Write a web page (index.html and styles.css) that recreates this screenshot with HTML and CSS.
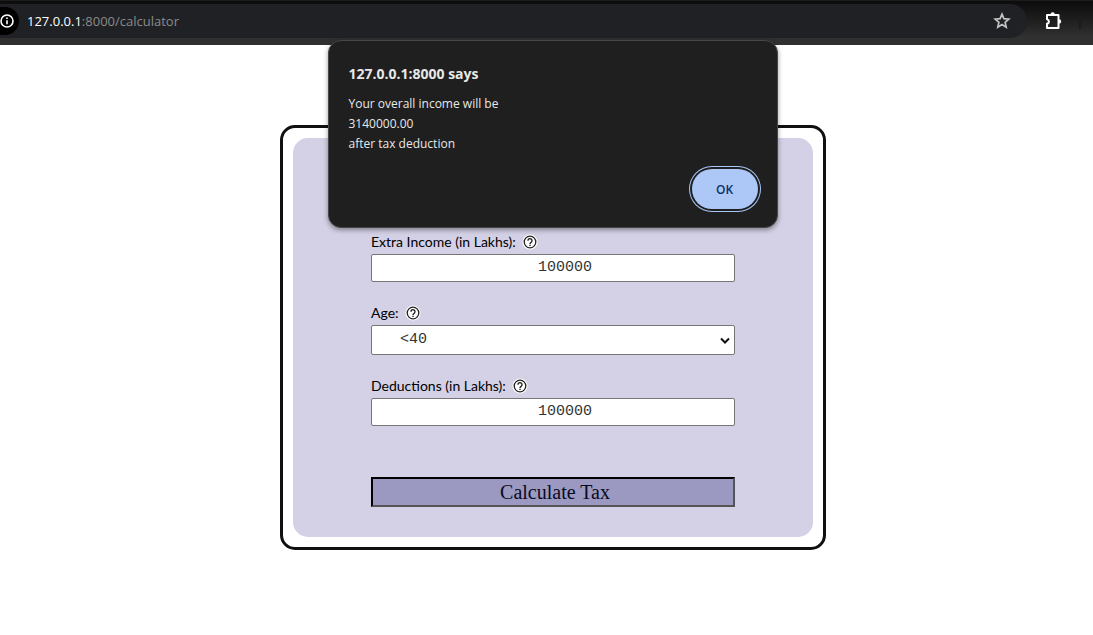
FILE: index.html
```html
<!DOCTYPE html>
<html lang="en">
<head>
<meta charset="utf-8">
<meta name="viewport" content="width=device-width, initial-scale=1">
<title>Tax Calculator</title>
<link rel="stylesheet" href="styles.css">
</head>
<body>
<svg class="defs" width="0" height="0" aria-hidden="true">
  <symbol id="help" viewBox="0 0 16 16">
    <circle cx="8" cy="8" r="7.6" fill="#fff"/>
    <circle cx="8" cy="8" r="5.8" fill="none" stroke="#222" stroke-width="1.3"/>
    <path d="M6 6.7a2 2 0 1 1 3.1 1.6C8.300 8.800 8 9.100 8 9.900M8 10.700v1.300" fill="none" stroke="#222" stroke-width="1.4"/>
  </symbol>
</svg>
<header class="toolbar">
  <div class="omnibox">
    <span class="site-info">
      <svg width="16" height="16" viewBox="0 0 16 16" fill="none" stroke="#fff" stroke-width="1.600" aria-hidden="true"><circle cx="8" cy="8" r="6"/><path d="M8 7.300v4M8 4.500v1.600"/></svg>
    </span>
    <span class="url"><span class="host">127.0.0.1</span>:8000/calculator</span>
    <button class="icon-button star" type="button" aria-label="Bookmark this page">
      <svg width="18" height="18" viewBox="0 0 18 18" fill="none" stroke="#c4c4c4" stroke-width="1.700" aria-hidden="true"><path d="M9 2.200l1.900 4.500 4.900.4-3.700 3.200 1.100 4.800L9 12.500l-4.200 2.600 1.100-4.800-3.700-3.200 4.900-.4z"/></svg>
    </button>
  </div>
  <button class="icon-button" type="button" aria-label="Extensions">
    <svg width="20" height="20" viewBox="0 0 20 20" aria-hidden="true"><path d="M4 4h11.500v13H4v-4.200c2.600-.8 2.600-3.800 0-4.600z" fill="none" stroke="#fff" stroke-width="2" stroke-linejoin="round"/><path d="M7.500 3.500a2.200 2.200 0 0 1 4.400 0zM16 8.200a2.200 2.200 0 0 1 0 4.400z" fill="#fff"/></svg>
  </button>
  <span class="divider"></span>
</header>

<main class="page">
  <section class="frame">
    <form class="panel">
      <div class="field">
        <div class="caption"><label for="extra">Extra Income (in Lakhs):</label><svg width="16" height="16" aria-hidden="true"><use href="#help"/></svg></div>
        <input class="control" id="extra" type="text" value="100000">
      </div>
      <div class="field">
        <div class="caption"><label for="age">Age:</label><svg width="16" height="16" aria-hidden="true"><use href="#help"/></svg></div>
        <div class="select-wrap">
          <select class="control select" id="age"><option>&lt;40</option></select>
          <svg class="chevron" width="12" height="8" viewBox="0 0 12 8" aria-hidden="true"><path d="M2 1.500l4 4 4-4" fill="none" stroke="#111" stroke-width="2"/></svg>
        </div>
      </div>
      <div class="field">
        <div class="caption"><label for="deductions">Deductions (in Lakhs):</label><svg width="16" height="16" aria-hidden="true"><use href="#help"/></svg></div>
        <input class="control" id="deductions" type="text" value="100000">
      </div>
      <button class="submit" type="button">Calculate Tax</button>
    </form>
  </section>
</main>

<div class="dialog" role="alertdialog" aria-labelledby="dialog-title" aria-describedby="dialog-text">
  <h1 class="dialog-title" id="dialog-title">127.0.0.1:8000 says</h1>
  <p class="dialog-text" id="dialog-text">Your overall income will be<br>3140000.00<br>after tax deduction</p>
  <button class="ok" type="button">OK</button>
</div>
</body>
</html>
```
FILE: styles.css
```css
* { box-sizing: border-box; }

body {
  margin: 0;
  background: #fff;
  font-family: Lato, "Liberation Sans", sans-serif;
}

.defs { position: absolute; }

.toolbar {
  display: flex;
  align-items: center;
  height: 45px;
  padding: 4px 12px 8px 0;
  background: linear-gradient(#0c0c0c 0, #151515 10px, #303030 36px);
  border-top: 1px solid #1c1c1c;
}

.omnibox {
  flex: 1;
  display: flex;
  align-items: center;
  height: 34px;
  margin-right: 16px;
  padding-right: 16px;
  background: #202124;
  border-radius: 0 17px 17px 0;
}

.site-info {
  display: flex;
  justify-content: flex-end;
  align-items: center;
  width: 19px;
  height: 28px;
  padding-right: 4px;
  background: #000;
  border-radius: 0 14px 14px 0;
}

.site-info svg { flex: none; }

.url {
  flex: 1;
  padding-left: 8px;
  color: #8b8b8b;
  font: 13px/20px "Open Sans", sans-serif;
}

.host { color: #fff; }

.icon-button {
  display: flex;
  padding: 0;
  border: 0;
  background: none;
}

.divider {
  width: 2px;
  height: 16px;
  margin-left: 16px;
  background: #1c1c1c;
}

.page {
  display: flex;
  justify-content: center;
  padding: 80px 0 80px 13px;
}

.frame {
  width: 50%;
  min-width: 546px;
  padding: 10px;
  border: 3px solid #101010;
  border-radius: 15px;
}

.panel {
  display: flex;
  flex-direction: column;
  gap: 22px;
  padding: 95px 78px 30px;
  background: #d4d0e5;
  border-radius: 15px;
}

.caption {
  display: flex;
  align-items: center;
  gap: 6px;
  height: 21px;
  padding-bottom: 4px;
  color: #000;
  font-size: 14px;
  line-height: 17px;
}

.control {
  display: block;
  width: 100%;
  height: 28px;
  margin: 0;
  padding: 0 0 2px 24px;
  border: 1px solid #767676;
  border-radius: 2px;
  background: #fff;
  color: #333;
  font: 15px "Liberation Mono", monospace;
  text-align: center;
}

.select-wrap { position: relative; }

.select {
  height: 30px;
  padding-left: 28px;
  appearance: none;
  text-align: left;
}

.chevron {
  position: absolute;
  top: 12px;
  right: 4px;
  pointer-events: none;
}

.submit {
  height: 30px;
  margin-top: 29px;
  padding: 0 0 0 4px;
  border: 2px solid;
  border-color: #000 #555 #555 #000;
  background: #9b99c1;
  color: #0a0a1e;
  font: 20px/26px "Liberation Serif", serif;
}

.dialog {
  position: absolute;
  top: 40px;
  left: 50%;
  width: 450px;
  margin-left: -219px;
  padding: 22px 19px 18px 20px;
  display: flex;
  flex-direction: column;
  background: #1f1f1f;
  border: 1px solid #464646;
  border-radius: 13px;
  box-shadow: 0 2px 5px rgba(0, 0, 0, 0.4);
  color: #e8e8e8;
  font-family: "Open Sans", sans-serif;
}

.dialog-title {
  margin: 0 0 10px;
  font-size: 14px;
  font-weight: 700;
  line-height: 21px;
}

.dialog-text {
  margin: 0 0 15px;
  font-size: 12px;
  line-height: 20px;
}

.ok {
  align-self: flex-end;
  width: 66px;
  height: 40px;
  padding: 0;
  border: 0;
  border-radius: 20px;
  background: #adc8f7;
  box-shadow: 0 0 0 2px #1f1f1f, 0 0 0 3px #a8c7fa;
  color: #0b2f6b;
  font: 600 12px "Open Sans", sans-serif;
}
```
